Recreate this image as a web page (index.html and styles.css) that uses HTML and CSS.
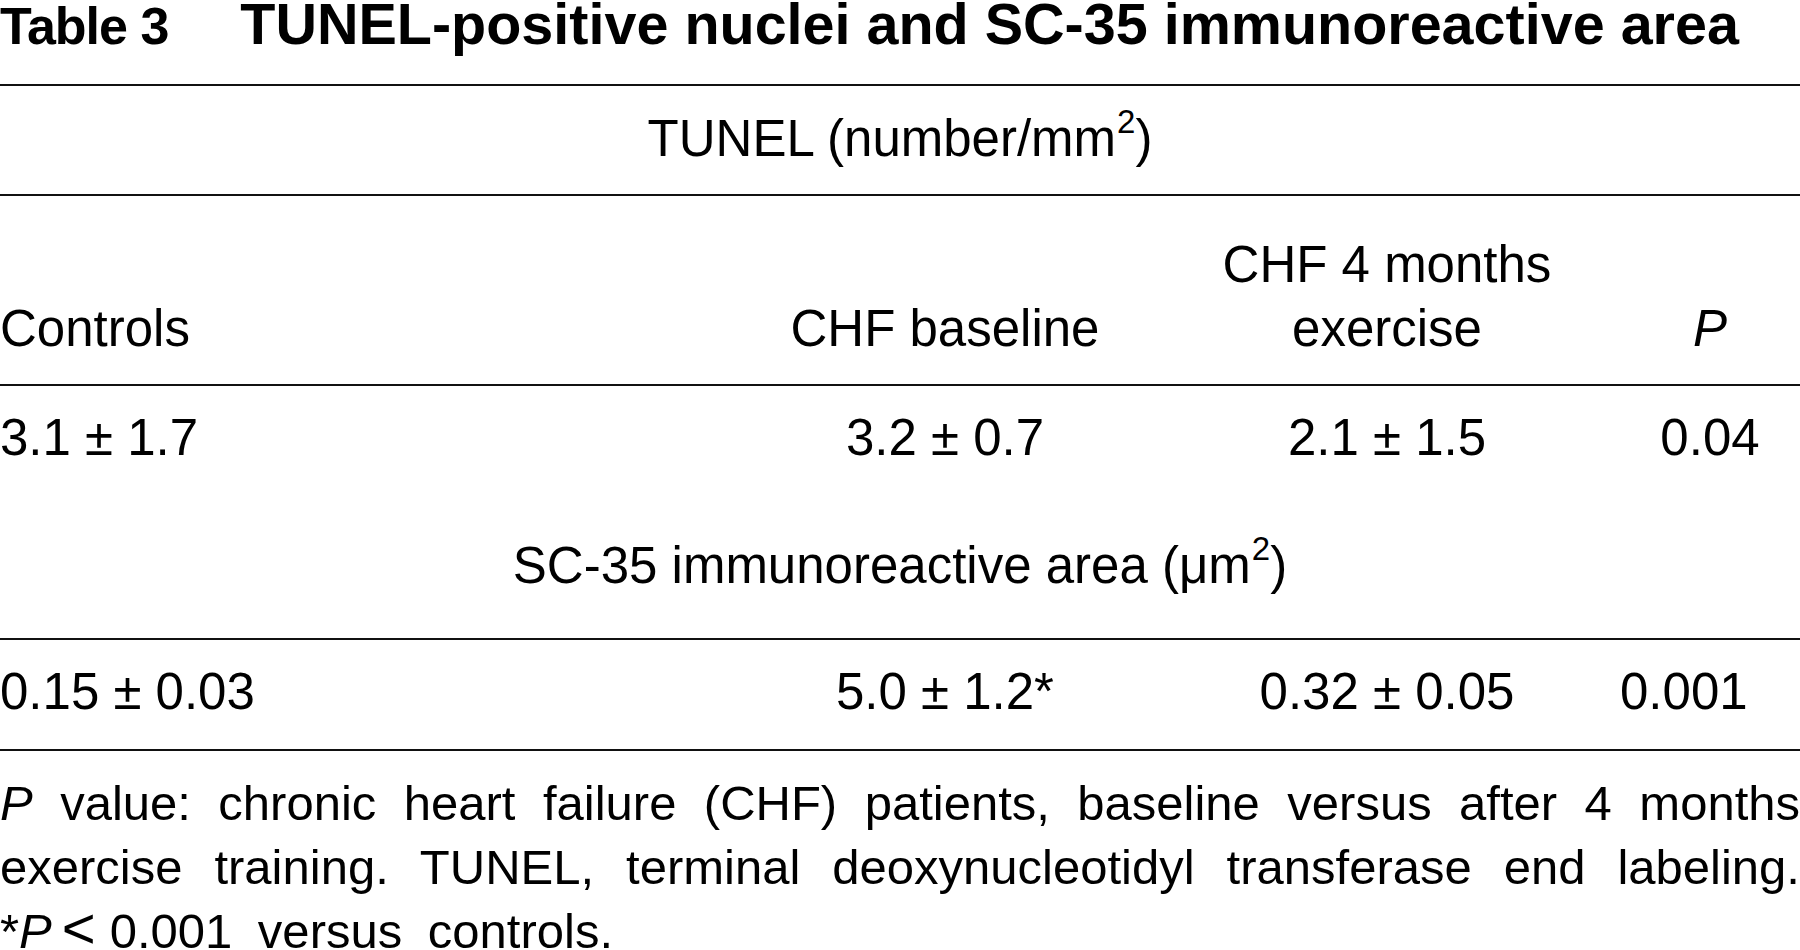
FILE: index.html
```html
<!DOCTYPE html>
<html lang="en">
<head>
<meta charset="utf-8">
<title>Table 3</title>
<link rel="stylesheet" href="styles.css">
</head>
<body>
<div class="page">
  <h1 class="title"><span class="label">Table 3</span>TUNEL-positive nuclei and SC-35 immunoreactive area</h1>
  <div class="table">
    <div class="group-head first">TUNEL (number/mm<sup>2</sup>)</div>
    <div class="row head">
      <div class="c1">Controls</div>
      <div class="c2">CHF baseline</div>
      <div class="c3">CHF 4 months<br>exercise</div>
      <div class="c4"><i>P</i></div>
    </div>
    <div class="row">
      <div class="c1">3.1 ± 1.7</div>
      <div class="c2">3.2 ± 0.7</div>
      <div class="c3">2.1 ± 1.5</div>
      <div class="c4">0.04</div>
    </div>
    <div class="group-head second">SC-35 immunoreactive area (μm<sup>2</sup>)</div>
    <div class="row last">
      <div class="c1">0.15 ± 0.03</div>
      <div class="c2">5.0 ± 1.2*</div>
      <div class="c3">0.32 ± 0.05</div>
      <div class="c4 shifted">0.001</div>
    </div>
  </div>
  <div class="notes">
    <span class="line just"><i>P</i> value: chronic heart failure (CHF) patients, baseline versus after 4 months</span>
    <span class="line just">exercise training. TUNEL, terminal deoxynucleotidyl transferase end labeling.</span>
    <span class="line spaced">*<i>P</i><span class="lt">&lt;</span>0.001 versus controls.</span>
  </div>
</div>
</body>
</html>
```
FILE: styles.css
```css
html, body {
  margin: 0;
  padding: 0;
  background: #ffffff;
  overflow: hidden;
}

body {
  width: 1800px;
  height: 950px;
  font-family: "Liberation Sans", Arial, sans-serif;
  color: #000000;
}

.page {
  width: 1800px;
}

.title {
  margin: 0;
  padding: 0 0 36px 0;
  font-size: 57.5px;
  line-height: 48px;
  font-weight: bold;
  white-space: nowrap;
}

.label {
  font-size: 52px;
  line-height: 40px;
  letter-spacing: -1px;
  margin-right: 72px;
}

.table {
  border-top: 2px solid #111111;
  font-size: 51px;
  line-height: 64px;
}

.group-head {
  text-align: center;
  border-bottom: 2px solid #111111;
}

.group-head.first {
  padding: 21px 0 23px;
}

.group-head.second {
  padding: 39px 0 40px;
}

sup {
  font-size: 33px;
  line-height: 0;
  vertical-align: 23px;
  margin-left: 1px;
}

.row {
  display: grid;
  grid-template-columns: 700px 490px 394px 216px;
  align-items: end;
  padding: 20px 0 25px;
  white-space: nowrap;
}

.row.head {
  padding: 37px 0 23px;
  border-bottom: 2px solid #111111;
}

.row.last {
  border-bottom: 2px solid #111111;
}

.c1 {
  text-align: left;
}

.c2,
.c3 {
  text-align: center;
}

.c4 {
  text-align: center;
  padding-left: 36px;
}

.c4.shifted {
  padding-left: 36px;
  padding-right: 54px;
}

.notes {
  margin-top: 20px;
  font-size: 49px;
  line-height: 64px;
}

.line {
  display: block;
  text-align: left;
}

.line.just {
  text-align: justify;
  text-align-last: justify;
}

.line.spaced {
  word-spacing: 12px;
}

.lt {
  font-size: 58px;
  line-height: 0;
  margin: 0 14px 0 10px;
}
```
